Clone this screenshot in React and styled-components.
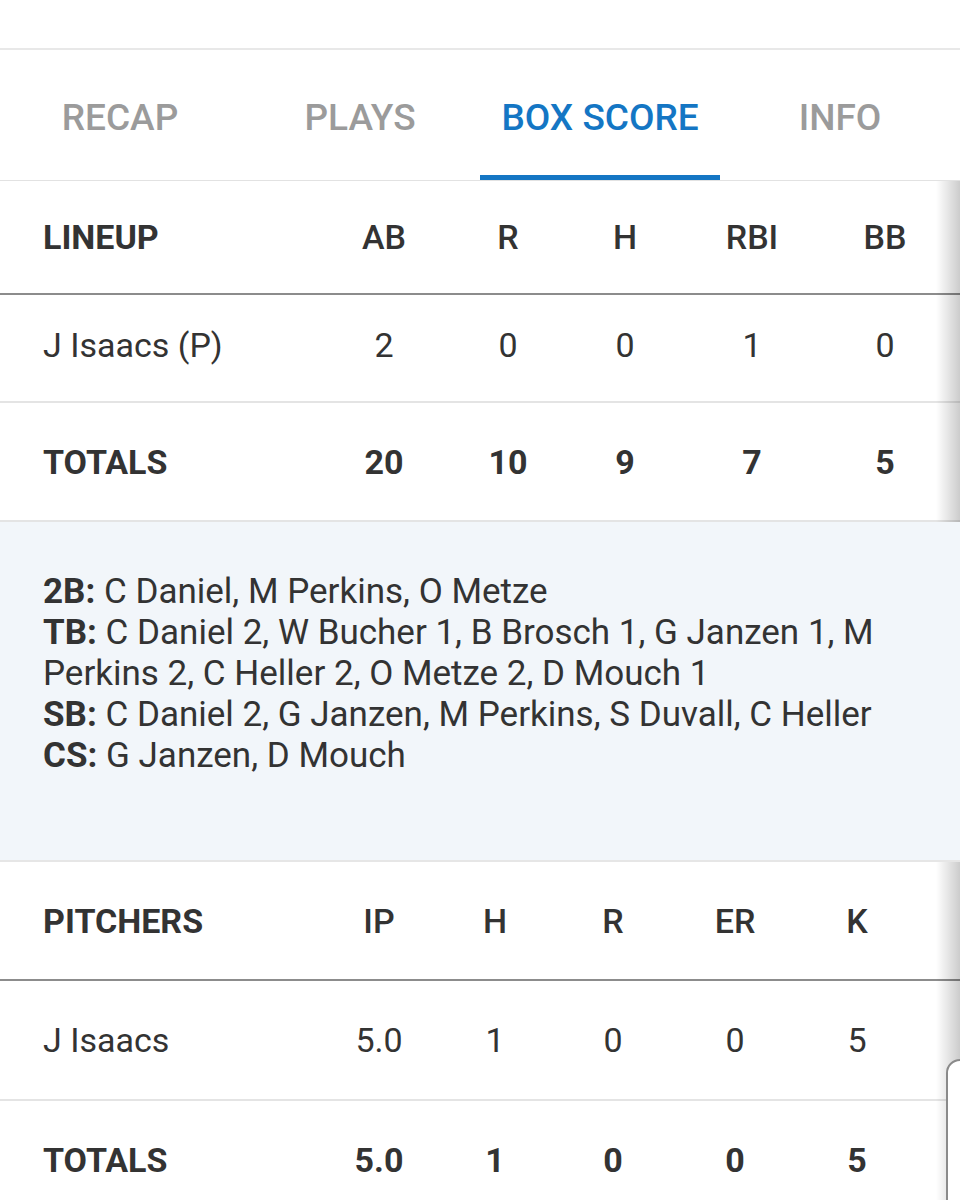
import React from "react";
import styled, { createGlobalStyle } from "styled-components";

const GlobalStyle = createGlobalStyle`
  * {
    box-sizing: border-box;
  }

  body {
    margin: 0;
    background: #fff;
    color: #333;
    font-family: Roboto, "Liberation Sans", sans-serif;
  }
`;

const Page = styled.div`
  background: #fff;
  overflow: hidden;
`;

const TopBar = styled.div`
  height: 50px;
  border-bottom: 2px solid #e8e8e8;
`;

const Tabs = styled.nav`
  display: grid;
  grid-template-columns: repeat(4, 1fr);
  height: 131px;
  border-bottom: 1px solid #e2e2e2;
`;

const Tab = styled.div`
  position: relative;
  display: flex;
  align-items: center;
  justify-content: center;
  padding-top: 4px;
  font-size: 37px;
  font-weight: 500;
  color: ${p => (p.$active ? "#1476c4" : "#9b9b9b")};

  &::after {
    content: "";
    display: ${p => (p.$active ? "block" : "none")};
    position: absolute;
    left: 0;
    right: 0;
    bottom: 0;
    height: 5px;
    background: #1476c4;
  }
`;

const TableWrap = styled.div`
  position: relative;

  &::after {
    content: "";
    position: absolute;
    top: 0;
    right: 0;
    bottom: 0;
    width: 24px;
    background: linear-gradient(to right, rgba(0, 0, 0, 0), rgba(0, 0, 0, 0.2));
    pointer-events: none;
  }
`;

const Row = styled.div`
  display: grid;
  grid-template-columns: ${p => p.$cols};
  align-items: center;
  height: ${p => p.$h}px;
  padding-bottom: ${p => p.$lift || 0}px;
  border-bottom: ${p => (p.$head ? "2px solid #8c8c8c" : "2px solid #e4e4e4")};
  font-size: 34px;
  font-weight: ${p => (p.$bold ? 700 : 400)};
  color: #333;
`;

const NameCell = styled.div`
  padding-left: 43px;
  font-weight: ${p => (p.$head ? 700 : "inherit")};
  white-space: nowrap;
`;

const Cell = styled.div`
  text-align: center;
  white-space: nowrap;
  font-weight: ${p => (p.$head ? 500 : "inherit")};
`;

const Notes = styled.div`
  height: 340px;
  padding: 49px 43px 0;
  background: #f2f6fa;
  border-bottom: 2px solid #e6e6e6;
  font-size: 35px;
  line-height: 41px;
  color: #333;
`;

const NoteLine = styled.div``;

const NoteKey = styled.b`
  font-weight: 700;
`;

const Widget = styled.div`
  position: fixed;
  left: 946px;
  top: 1059px;
  width: 120px;
  height: 220px;
  background: #fff;
  border: 2px solid #8a8a8a;
  border-radius: 14px;
`;

const LINEUP_COLS = "324px 120px 128px 106px 148px 118px 1fr";
const PITCH_COLS = "320px 118px 114px 122px 122px 122px 1fr";

const lineup = {
  head: ["AB", "R", "H", "RBI", "BB"],
  rows: [{ name: "J Isaacs (P)", stats: [2, 0, 0, 1, 0] }],
  totals: [20, 10, 9, 7, 5],
};

const pitchers = {
  head: ["IP", "H", "R", "ER", "K"],
  rows: [{ name: "J Isaacs", stats: ["5.0", 1, 0, 0, 5] }],
  totals: ["5.0", 1, 0, 0, 5],
};

const notes = [
  ["2B", "C Daniel, M Perkins, O Metze"],
  ["TB", "C Daniel 2, W Bucher 1, B Brosch 1, G Janzen 1, M Perkins 2, C Heller 2, O Metze 2, D Mouch 1"],
  ["SB", "C Daniel 2, G Janzen, M Perkins, S Duvall, C Heller"],
  ["CS", "G Janzen, D Mouch"],
];

function StatTable({ title, data, cols, heights, lift }) {
  return (
    <TableWrap>
      <Row $cols={cols} $h={heights[0]} $head>
        <NameCell $head>{title}</NameCell>
        {data.head.map(h => (
          <Cell key={h} $head>{h}</Cell>
        ))}
      </Row>
      {data.rows.map(r => (
        <Row key={r.name} $cols={cols} $h={heights[1]} $lift={lift}>
          <NameCell>{r.name}</NameCell>
          {r.stats.map((s, i) => (
            <Cell key={i}>{s}</Cell>
          ))}
        </Row>
      ))}
      <Row $cols={cols} $h={heights[2]} $bold>
        <NameCell>TOTALS</NameCell>
        {data.totals.map((s, i) => (
          <Cell key={i}>{s}</Cell>
        ))}
      </Row>
    </TableWrap>
  );
}

export default function App() {
  return (
    <Page>
      <GlobalStyle />
      <TopBar />
      <Tabs>
        <Tab>RECAP</Tab>
        <Tab>PLAYS</Tab>
        <Tab $active>BOX SCORE</Tab>
        <Tab>INFO</Tab>
      </Tabs>

      <StatTable title="LINEUP" data={lineup} cols={LINEUP_COLS} heights={[114, 108, 119]} lift={6} />

      <Notes>
        {notes.map(([k, v]) => (
          <NoteLine key={k}>
            <NoteKey>{k}:</NoteKey> {v}
          </NoteLine>
        ))}
      </Notes>

      <StatTable title="PITCHERS" data={pitchers} cols={PITCH_COLS} heights={[119, 120, 120]} />

      <Widget />
    </Page>
  );
}
